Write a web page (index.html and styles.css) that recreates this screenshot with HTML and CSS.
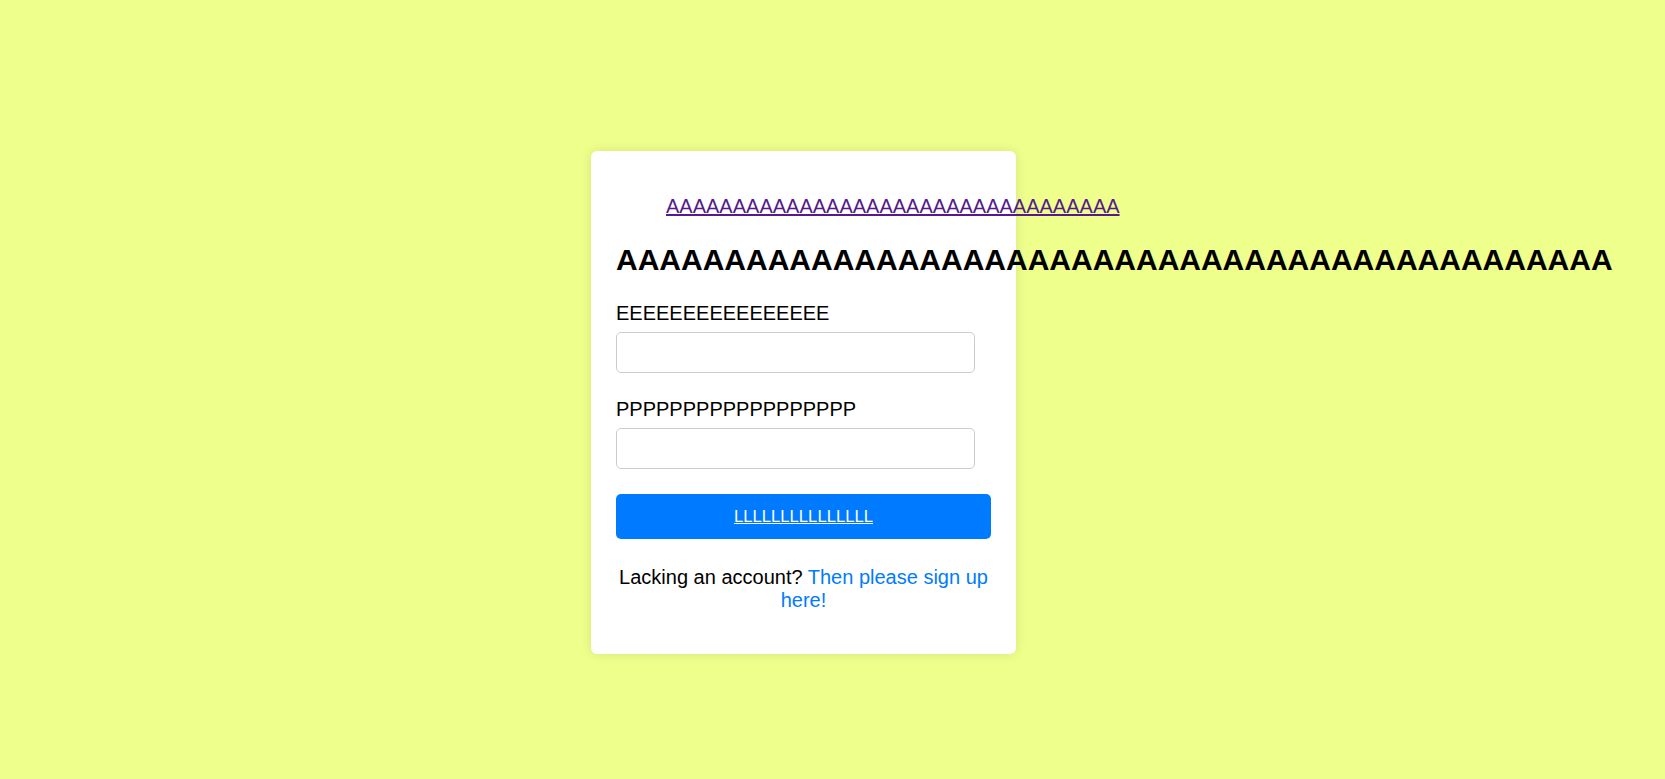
FILE: index.html
```html
<!DOCTYPE html>
<html lang="en">
<head>
<meta charset="utf-8">
<title>Login</title>
<link rel="stylesheet" href="styles.css">
</head>
<body>
<div class="page">
  <div class="card">
    <div class="nav"><a class="nav-link" href="#">AAAAAAAAAAAAAAAAAAAAAAAAAAAAAAAAAA</a></div>
    <h2 class="title">AAAAAAAAAAAAAAAAAAAAAAAAAAAAAAAAAAAAAAAAAAAAAA</h2>
    <form class="form">
      <div class="field">
        <label class="label" for="email">EEEEEEEEEEEEEEEE</label>
        <input class="input" id="email" type="text">
      </div>
      <div class="field">
        <label class="label" for="password">PPPPPPPPPPPPPPPPPP</label>
        <input class="input" id="password" type="password">
      </div>
      <a class="button" href="#">LLLLLLLLLLLLLLL</a>
    </form>
    <p class="signup">Lacking an account? <a class="signup-link" href="#">Then please sign up here!</a></p>
  </div>
</div>
</body>
</html>
```

FILE: styles.css
```css
html, body {
  margin: 0;
  padding: 0;
}

body {
  background: #eeff8c;
  font-family: "Liberation Sans", Arial, sans-serif;
  color: #000;
}

.page {
  padding: 151px 0 0 591px;
  min-height: 779px;
  box-sizing: border-box;
}

.card {
  width: 425px;
  box-sizing: border-box;
  padding: 25px;
  background: #fff;
  border-radius: 6px;
  box-shadow: 0 0 12px rgba(0, 0, 0, 0.1);
}

.nav {
  margin: 19px 0 0;
  padding-left: 50px;
  font-size: 20px;
  line-height: 23px;
  white-space: nowrap;
}

.nav-link {
  color: #551a8b;
  text-decoration: underline;
}

.title {
  margin: 25px 0 25px;
  font-size: 30px;
  font-weight: bold;
  line-height: 34px;
  white-space: nowrap;
}

.form {
  margin: 0;
}

.field {
  margin-bottom: 25px;
}

.label {
  display: block;
  font-size: 20px;
  line-height: 23px;
  margin-bottom: 7px;
}

.input {
  display: block;
  width: 359px;
  height: 41px;
  box-sizing: border-box;
  padding: 10px;
  border: 1px solid #ccc;
  border-radius: 5px;
  font-family: "Liberation Sans", Arial, sans-serif;
  font-size: 16.67px;
  background: #fff;
  outline: none;
}

.button {
  display: block;
  width: 100%;
  height: 45px;
  margin-top: 1px;
  box-sizing: border-box;
  border-radius: 5px;
  background: #007bff;
  color: #fff;
  text-align: center;
  font-size: 16.67px;
  line-height: 45px;
  text-decoration: underline;
}

.signup {
  margin: 27px 0 17px;
  text-align: center;
  font-size: 20px;
  line-height: 23px;
}

.signup-link {
  color: #007bff;
  text-decoration: none;
}
```
